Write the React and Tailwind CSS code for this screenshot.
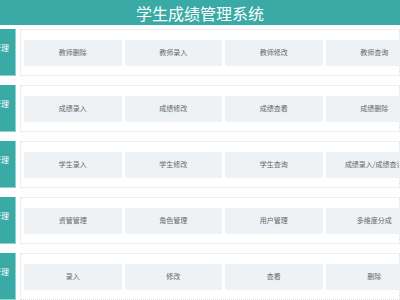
const rows = [
  { label: "教师管理", items: ["教师删除", "教师录入", "教师修改", "教师查询"] },
  { label: "成绩管理", items: ["成绩录入", "成绩修改", "成绩查看", "成绩删除"] },
  { label: "学生管理", items: ["学生录入", "学生修改", "学生查询", "成绩录入/成绩查询"] },
  { label: "系统管理", items: ["资管管理", "角色管理", "用户管理", "多维度分成"] },
  { label: "数据管理", items: ["录入", "修改", "查看", "删除"] },
];

const App = () => {
  return (
    <div
      className="w-[400px] h-[300px] overflow-hidden bg-white"
      style={{ fontFamily: '"Noto Sans CJK SC", "Noto Sans", sans-serif' }}
    >
      <div className="h-[25px] bg-[#39aaa6] flex items-center justify-center">
        <h1 className="text-white text-[16px] leading-none tracking-[0px]">学生成绩管理系统</h1>
      </div>

      <div className="flex flex-col gap-[9px] pt-[4px]">
        {rows.map((row) => (
          <div key={row.label} className="flex gap-[4px] h-[47px]">
            {/* row label, clipped at the left edge */}
            <div className="w-[16px] shrink-0 bg-[#39aaa6] border-r border-b border-[#8fd3cf] flex justify-end items-center pr-[6px] pb-[9px] overflow-hidden">
              <span className="text-white text-[8px] whitespace-nowrap leading-none">{row.label}</span>
            </div>

            <div className="flex-1 min-w-0 border border-dotted border-[#dcdfe8] flex items-center gap-[3px] pl-[3px] overflow-hidden">
              {row.items.map((item) => (
                <div
                  key={item}
                  className="w-[97.5px] h-[26px] shrink-0 bg-[#eff2f5] flex items-center justify-center"
                >
                  <span className="text-[7px] text-[#666] whitespace-nowrap leading-none">{item}</span>
                </div>
              ))}
            </div>
          </div>
        ))}
      </div>
    </div>
  );
};

export default App;
